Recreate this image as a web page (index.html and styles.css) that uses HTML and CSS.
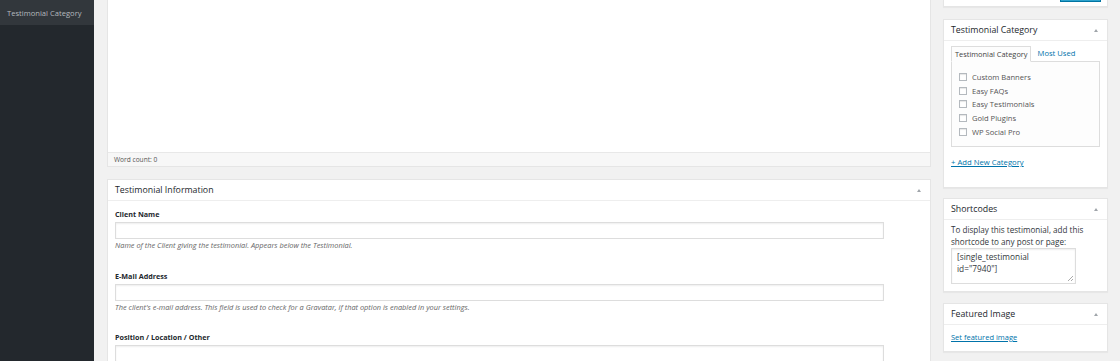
FILE: index.html
```html
<!DOCTYPE html>
<html>
<head>
<meta charset="utf-8">
<link rel="stylesheet" href="styles.css">
</head>
<body>
<div class="wrap">
  <aside class="sidebar">
    <div class="side-item">Testimonial Category</div>
  </aside>
  <main class="main">
    <section class="col-main">
      <div class="editor">
        <div class="editor-area"></div>
        <div class="status">Word count: 0</div>
      </div>
      <div class="postbox info-box">
        <div class="hdr"><span class="title">Testimonial Information</span><span class="arrow"></span></div>
        <div class="inside">
          <div class="field">
            <label class="lbl">Client Name</label>
            <div class="input"></div>
            <p class="desc">Name of the Client giving the testimonial. Appears below the Testimonial.</p>
          </div>
          <div class="field">
            <label class="lbl">E-Mail Address</label>
            <div class="input"></div>
            <p class="desc">The client's e-mail address. This field is used to check for a Gravatar, if that option is enabled in your settings.</p>
          </div>
          <div class="field">
            <label class="lbl">Position / Location / Other</label>
            <div class="input"></div>
          </div>
        </div>
      </div>
    </section>
    <section class="col-side">
      <div class="postbox publish">
        <div class="pub-actions"><span class="btn"></span></div>
      </div>
      <div class="postbox cat-box">
        <div class="hdr"><span class="title">Testimonial Category</span><span class="arrow"></span></div>
        <div class="inside">
          <div class="tabs">
            <span class="tab active">Testimonial Category</span>
            <span class="tab link">Most Used</span>
          </div>
          <ul class="cat-list">
            <li><span class="cb"></span>Custom Banners</li>
            <li><span class="cb"></span>Easy FAQs</li>
            <li><span class="cb"></span>Easy Testimonials</li>
            <li><span class="cb"></span>Gold Plugins</li>
            <li><span class="cb"></span>WP Social Pro</li>
          </ul>
          <a class="add-new">+ Add New Category</a>
        </div>
      </div>
      <div class="postbox sc-box">
        <div class="hdr"><span class="title">Shortcodes</span><span class="arrow"></span></div>
        <div class="inside">
          <p class="sc-text">To display this testimonial, add this shortcode to any post or page:</p>
          <div class="sc-area">[single_testimonial id="7940"]<span class="grip"></span></div>
        </div>
      </div>
      <div class="postbox fi-box">
        <div class="hdr"><span class="title">Featured Image</span><span class="arrow"></span></div>
        <div class="inside">
          <a class="fi-link">Set featured image</a>
        </div>
      </div>
    </section>
  </main>
</div>
</body>
</html>
```

FILE: styles.css
```css
* { box-sizing: border-box; }
html, body { margin: 0; padding: 0; }
body {
  width: 1120px;
  height: 361px;
  overflow: hidden;
  background: #f1f1f1;
  font-family: "Open Sans", "Noto Sans", sans-serif;
  color: #444;
}
.wrap { display: flex; height: 361px; overflow: hidden; }
.sidebar { width: 94px; background: #23282d; flex: none; }
.side-item {
  height: 25px;
  background: #32373c;
  color: #b4b9be;
  font-size: 7.6px;
  padding: 8px 0 0 7px;
  line-height: 10px;
}
.main { flex: 1; display: flex; gap: 12px; padding-left: 13px; min-height: 0; overflow: hidden; }
.col-main { width: 824px; flex: none; display: flex; flex-direction: column; gap: 12px; min-height: 0; overflow: hidden; }
.col-side { width: 165px; flex: none; display: flex; flex-direction: column; }

.editor { border: 1px solid #e5e5e5; border-top: none; background: #fff; flex: none; }
.editor-area { height: 152px; }
.status {
  height: 14px;
  background: #f7f7f7;
  border-top: 1px solid #e8e8e8;
  font-size: 6.6px;
  color: #555;
  padding: 2px 0 0 6px;
  line-height: 10px;
}

.postbox {
  background: #fff;
  border: 1px solid #e5e5e5;
  box-shadow: 0 1px 1px rgba(0,0,0,.04);
}
.hdr {
  height: 21px;
  border-bottom: 1px solid #eee;
  display: flex;
  align-items: center;
  justify-content: space-between;
  padding: 0 9px 0 7px;
}
.title { font-size: 8.8px; color: #23282d; line-height: 12px; }
.arrow {
  width: 0; height: 0;
  border-left: 2.5px solid transparent;
  border-right: 2.5px solid transparent;
  border-bottom: 3px solid #a0a5aa;
}

.info-box { flex: 1; min-height: 0; overflow: hidden; border-bottom: none; }
.info-box .inside { padding: 8px 46px 0 7px; }
.field { margin-bottom: 20.5px; }
.lbl { display: block; font-size: 7.2px; font-weight: 700; color: #23282d; line-height: 10px; height: 10px; }
.input {
  margin-top: 3px;
  height: 17px;
  border: 1px solid #ddd;
  box-shadow: inset 0 1px 2px rgba(0,0,0,.07);
  background: #fff;
}
.desc {
  margin: 1px 0 0 0;
  font-size: 7.4px;
  font-style: italic;
  color: #666;
  line-height: 10px;
}

.publish { height: 7px; border-top: none; position: relative; margin-bottom: 12px; }
.pub-actions { display: flex; justify-content: flex-end; padding-right: 6px; }
.btn { width: 41px; height: 2px; background: #2ea2cc; border: 1px solid #0074a2; border-top: none; display: block; }

.cat-box { margin-bottom: 10px; }
.cat-box .inside { padding: 5px 7px 20px 7px; }
.tabs { display: flex; align-items: flex-end; height: 15px; }
.tab { font-size: 7.4px; line-height: 10px; }
.tab.active {
  border: 1px solid #ddd;
  border-bottom: 1px solid #fdfdfd;
  background: #fdfdfd;
  padding: 2px 2px 3px 3px;
  height: 16px;
  color: #444;
  margin-bottom: -1px;
  position: relative;
  z-index: 1;
}
.tab.link { color: #0073aa; padding: 0 0 3px 7px; font-size: 7.6px; }
.cat-list {
  list-style: none;
  margin: 0;
  padding: 8px 7px 6px 7px;
  border: 1px solid #ddd;
  background: #fdfdfd;
  height: 86px;
}
.cat-list li {
  display: flex;
  align-items: center;
  font-size: 7.6px;
  color: #555;
  height: 13.8px;
}
.cb {
  width: 8px; height: 8px;
  border: 1px solid #b4b9be;
  background: #fff;
  box-shadow: inset 0 1px 1px rgba(0,0,0,.1);
  margin-right: 5px;
  flex: none;
}
.add-new {
  display: block;
  margin-top: 10px;
  font-size: 7.7px;
  color: #0073aa;
  text-decoration: underline;
  line-height: 10px;
}

.sc-box { margin-bottom: 11px; }
.sc-box .inside { padding: 4px 7px 7px 7px; }
.sc-text { margin: 0; font-size: 8.1px; color: #32373c; line-height: 12px; }
.sc-area {
  position: relative;
  width: 125px;
  height: 36px;
  border: 1px solid #ddd;
  box-shadow: inset 0 1px 2px rgba(0,0,0,.07);
  font-size: 8.3px;
  line-height: 11.5px;
  padding: 2px 5px;
  color: #32373c;
}
.grip {
  position: absolute; right: 2px; bottom: 2px;
  width: 5px; height: 5px;
  background: linear-gradient(135deg, transparent 45%, #aaa 46%, #aaa 55%, transparent 56%, transparent 70%, #aaa 71%, #aaa 80%, transparent 81%);
}

.fi-box .inside { padding: 7px 7px 9px 7px; }
.fi-link { font-size: 7.5px; color: #0073aa; text-decoration: underline; line-height: 10px; display: block; }
```
